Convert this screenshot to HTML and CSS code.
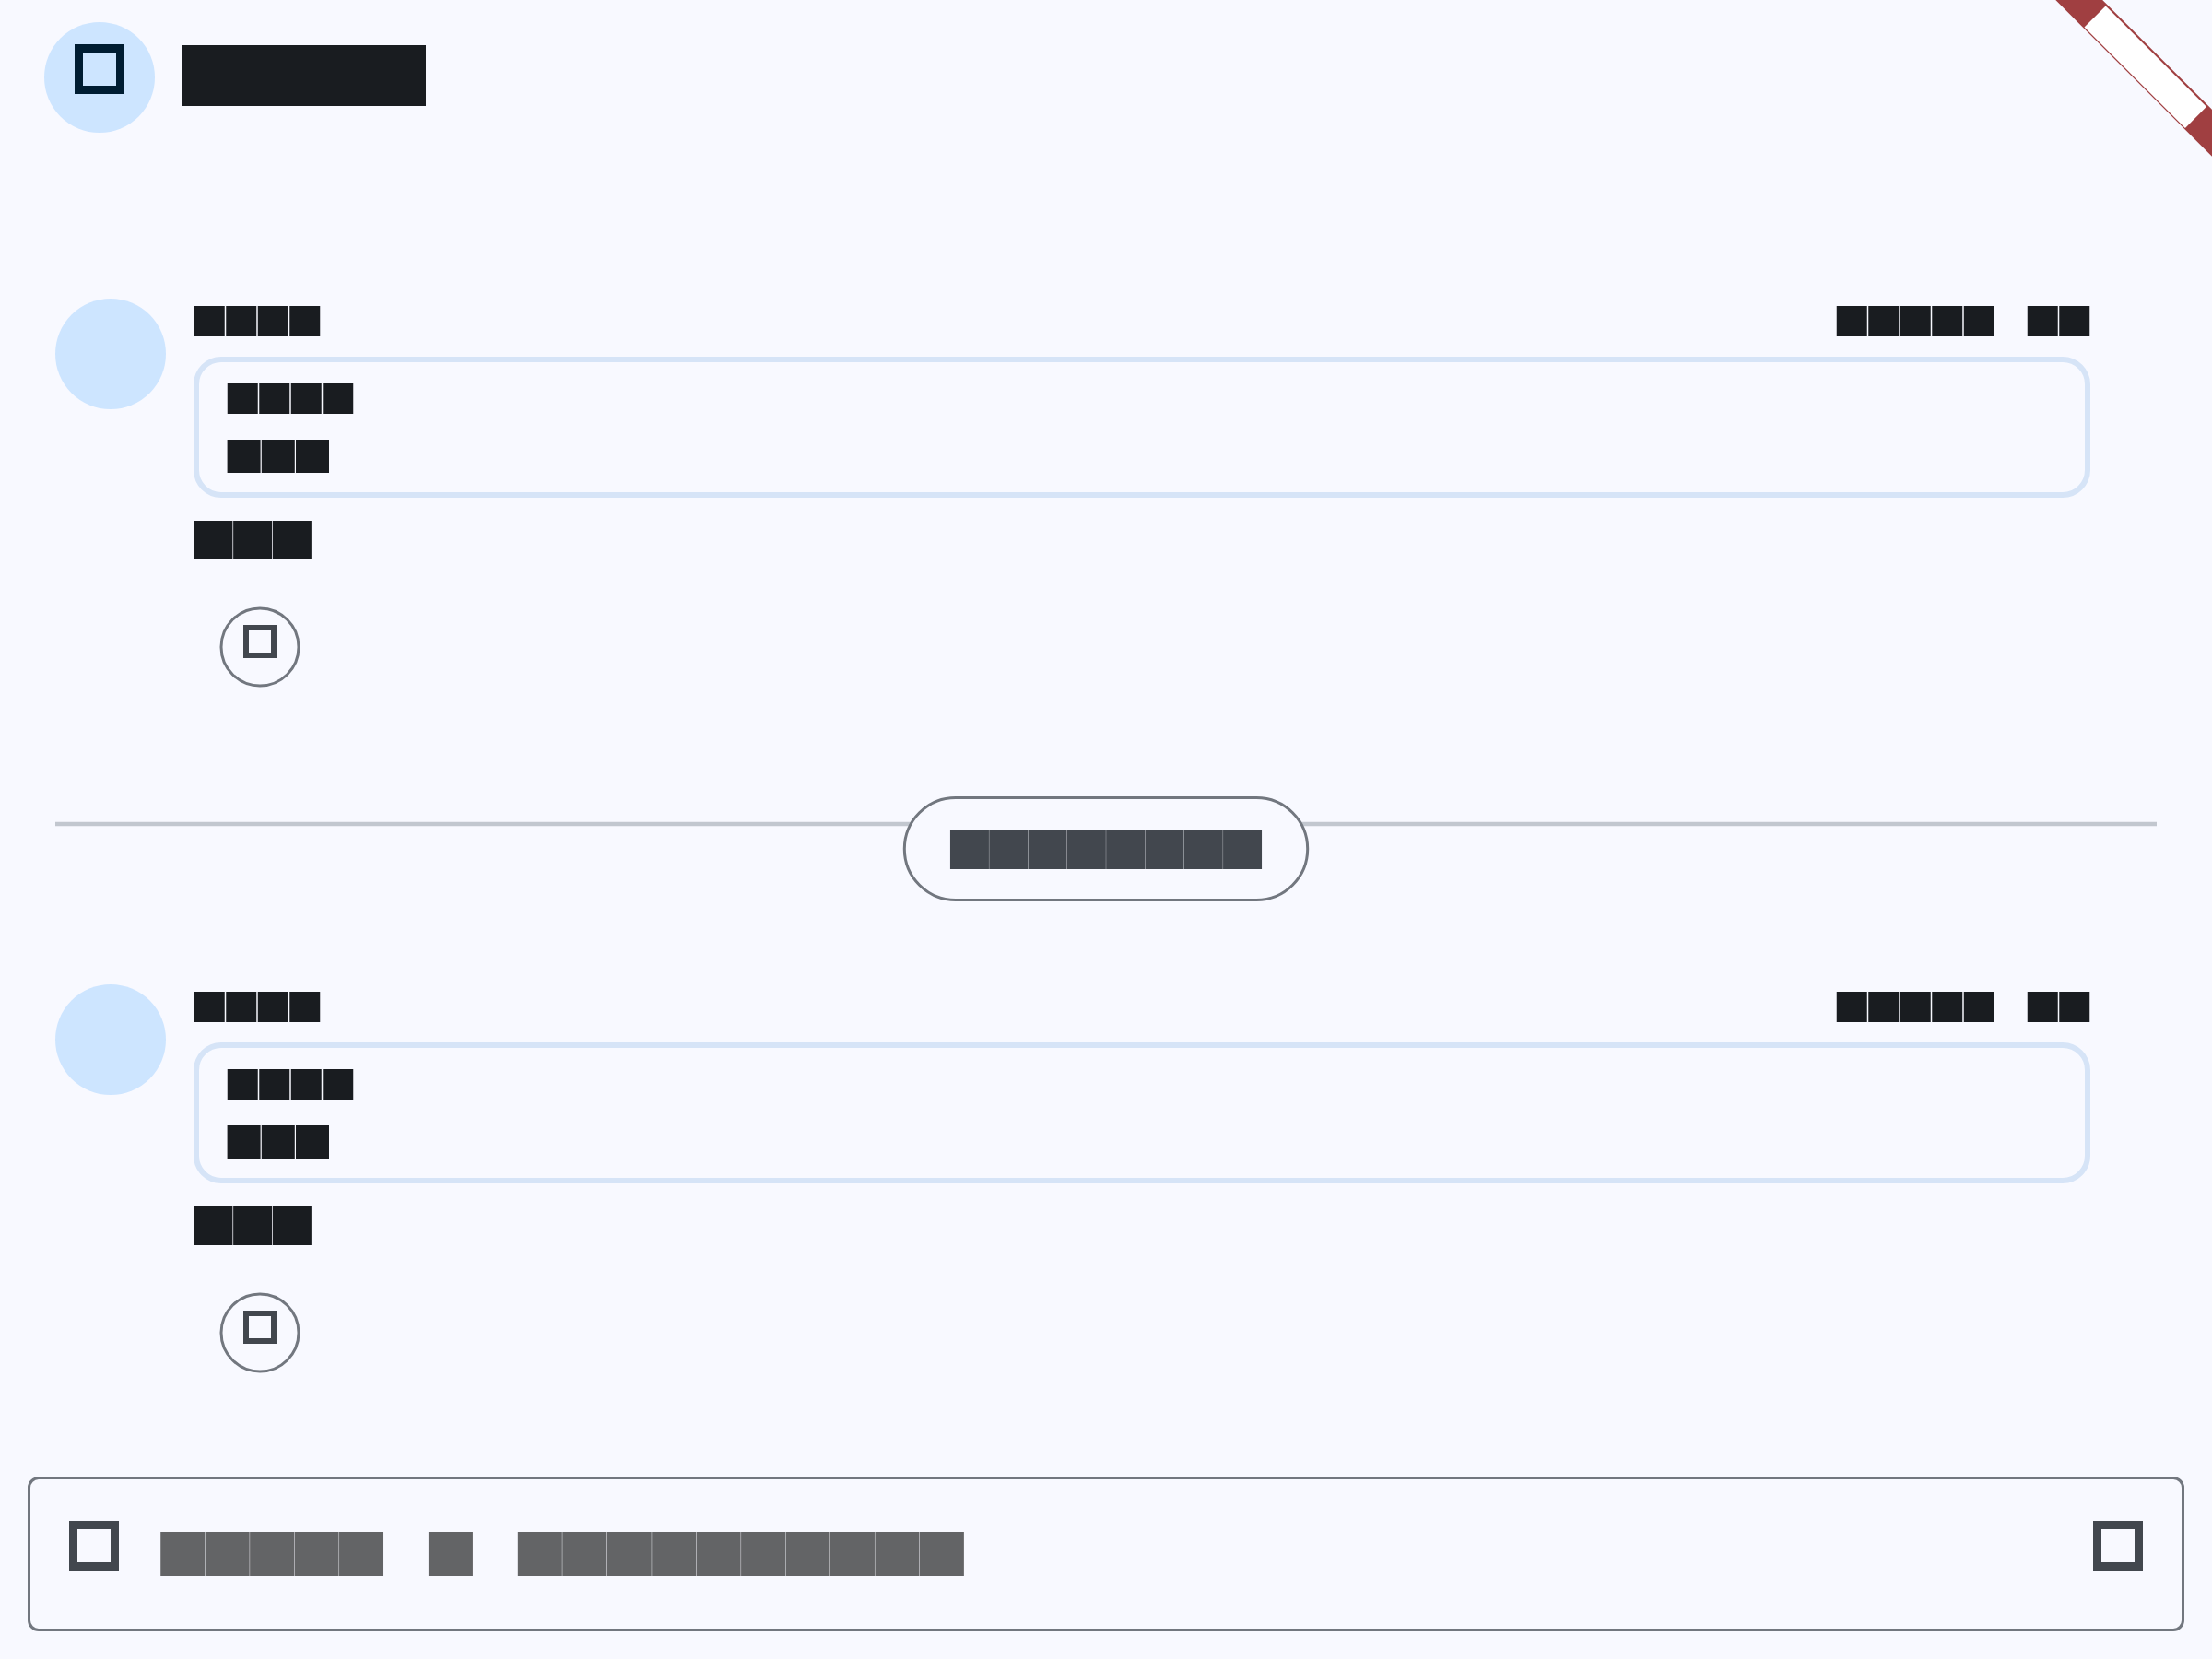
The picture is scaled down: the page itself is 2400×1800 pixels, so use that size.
FILE: index.html
```html
<!DOCTYPE html>
<html lang="en">
<head>
<meta charset="utf-8">
<title>Messages</title>
<link rel="stylesheet" href="styles.css">
</head>
<body>
<svg class="defs" aria-hidden="true">
  <defs>
    <g id="label-4"><rect x=".75" width="33" height="33"/><rect x="35.25" width="33" height="33"/><rect x="69.75" width="33" height="33"/><rect x="104.25" width="33" height="33"/></g>
    <g id="date"><use href="#label-4"/><rect x="138.75" width="33" height="33"/><rect x="207.75" width="33" height="33"/><rect x="242.25" width="33" height="33"/></g>
    <g id="small-3"><rect x=".6" width="36" height="36"/><rect x="37.8" width="36" height="36"/><rect x="75" width="36" height="36"/></g>
    <g id="body-3"><rect x=".375" width="42" height="42"/><rect x="43.125" width="42" height="42"/><rect x="85.875" width="42" height="42"/></g>
  </defs>
</svg>
<div class="screen">
  <header class="topbar">
    <div class="avatar avatar-icon"><span class="glyph glyph-primary"></span></div>
    <div class="title"></div>
  </header>

  <main class="thread">
    <article class="message">
      <div class="avatar"></div>
      <div class="content">
        <div class="meta">
          <svg width="138" height="33"><use href="#label-4"/></svg>
          <svg width="276" height="33"><use href="#date"/></svg>
        </div>
        <div class="quote">
          <svg width="138" height="33"><use href="#label-4"/></svg>
          <svg width="112" height="36"><use href="#small-3"/></svg>
        </div>
        <svg class="body" width="129" height="42"><use href="#body-3"/></svg>
        <div class="reaction">
          <svg class="ring" width="88" height="88"><circle cx="44" cy="44" r="42"/></svg>
          <span class="glyph glyph-small"></span>
        </div>
      </div>
    </article>

    <div class="divider">
      <svg class="rule" width="2280" height="6"><rect y=".75" width="2280" height="4.5"/></svg>
      <svg class="pill" width="442" height="114">
        <rect class="pill-shape" x="2.3" y="1.5" width="437.4" height="111" rx="55.5"/>
        <g class="pill-label">
          <rect x="51.95" y="37" width="42" height="42"/><rect x="94.25" y="37" width="42" height="42"/><rect x="136.55" y="37" width="42" height="42"/><rect x="178.85" y="37" width="42" height="42"/><rect x="221.15" y="37" width="42" height="42"/><rect x="263.45" y="37" width="42" height="42"/><rect x="305.75" y="37" width="42" height="42"/><rect x="348.05" y="37" width="42" height="42"/>
        </g>
      </svg>
    </div>

    <article class="message message-last">
      <div class="avatar"></div>
      <div class="content">
        <div class="meta">
          <svg width="138" height="33"><use href="#label-4"/></svg>
          <svg width="276" height="33"><use href="#date"/></svg>
        </div>
        <div class="quote">
          <svg width="138" height="33"><use href="#label-4"/></svg>
          <svg width="112" height="36"><use href="#small-3"/></svg>
        </div>
        <svg class="body" width="129" height="42"><use href="#body-3"/></svg>
        <div class="reaction">
          <svg class="ring" width="88" height="88"><circle cx="44" cy="44" r="42"/></svg>
          <span class="glyph glyph-small"></span>
        </div>
      </div>
    </article>
  </main>

  <footer class="composer">
    <span class="glyph"></span>
    <svg class="hint" width="873" height="48">
      <rect x=".225" width="48" height="48"/><rect x="48.675" width="48" height="48"/><rect x="97.125" width="48" height="48"/><rect x="145.575" width="48" height="48"/><rect x="194.025" width="48" height="48"/>
      <rect x="290.925" width="48" height="48"/>
      <rect x="387.825" width="48" height="48"/><rect x="436.275" width="48" height="48"/><rect x="484.725" width="48" height="48"/><rect x="533.175" width="48" height="48"/><rect x="581.625" width="48" height="48"/><rect x="630.075" width="48" height="48"/><rect x="678.525" width="48" height="48"/><rect x="726.975" width="48" height="48"/><rect x="775.425" width="48" height="48"/><rect x="823.875" width="48" height="48"/>
    </svg>
    <span class="glyph"></span>
  </footer>

  <svg class="ribbon" width="170" height="170">
    <polygon class="ribbon-band" points="0.3,0 51.2,0 170,118.8 170,169.7"/>
    <polygon class="ribbon-label" points="54.6,6.4 164,115.8 140.9,138.9 31.5,29.5"/>
  </svg>
</div>
</body>
</html>
```

FILE: styles.css
```css
* {
  box-sizing: border-box;
}

body {
  margin: 0;
  background: #f8f9ff;
  font-family: Roboto, sans-serif;
}

svg {
  display: block;
  flex: none;
}

.defs {
  position: absolute;
  width: 0;
  height: 0;
}

.screen {
  position: relative;
  display: flex;
  flex-direction: column;
  width: 2400px;
  height: 1800px;
  overflow: hidden;
  color: #191c20;
  fill: currentColor;
}

/* Top bar */
.topbar {
  display: flex;
  flex: none;
  align-items: flex-start;
  gap: 30px;
  height: 168px;
  padding: 24px 48px;
}

.avatar {
  flex: none;
  width: 120px;
  height: 120px;
  border-radius: 50%;
  background: #cde5ff;
}

.avatar-icon {
  display: flex;
  justify-content: center;
  padding-top: 24px;
}

.title {
  width: 264px;
  height: 66px;
  margin-top: 25px;
  background: #191c20;
}

.glyph {
  flex: none;
  width: 54px;
  height: 54px;
  border: 9px solid #42474e;
}

.glyph-primary {
  border-color: #001d32;
}

.glyph-small {
  width: 36px;
  height: 36px;
  border-width: 6px;
}

/* Messages */
.thread {
  flex: 1;
  padding: 156px 60px 0;
}

.message {
  display: flex;
  gap: 30px;
  height: 540px;
  padding-right: 72px;
}

.message-last {
  height: 450px;
}

.content {
  flex: 1;
  padding-top: 8px;
}

.meta {
  display: flex;
  justify-content: space-between;
}

.quote {
  display: flex;
  flex-direction: column;
  gap: 28px;
  height: 153px;
  margin-top: 22px;
  padding: 23px 30px;
  border: 6px solid #d6e4f7;
  border-radius: 30px;
}

.body {
  margin-top: 25px;
}

.reaction {
  display: grid;
  justify-items: center;
  width: 88px;
  height: 88px;
  margin: 51px 0 0 28px;
}

.reaction > * {
  grid-area: 1 / 1;
}

.reaction .glyph {
  margin-top: 20px;
}

.ring {
  fill: none;
  stroke: #72777f;
  stroke-width: 3;
}

/* Divider with centred pill */
.divider {
  display: grid;
  justify-items: center;
  height: 204px;
}

.divider > * {
  grid-area: 1 / 1;
}

.rule {
  margin-top: 27px;
  fill: #c2c7cf;
}

.pill-shape {
  fill: #f8f9ff;
  stroke: #72777f;
  stroke-width: 3;
}

.pill-label {
  fill: #42474e;
}

/* Composer */
.composer {
  display: flex;
  flex: none;
  align-items: flex-start;
  height: 168px;
  margin: 0 30px 30px;
  padding: 45px 42px;
  border: 3px solid #72777f;
  border-radius: 12px;
}

.composer .glyph:last-child {
  margin-left: auto;
}

.hint {
  margin: 12px 0 0 45px;
  fill: #636466;
}

/* Corner ribbon */
.ribbon {
  position: absolute;
  top: 0;
  right: 0;
}

.ribbon-band {
  fill: #a03f41;
}

.ribbon-label {
  fill: #ffffff;
}
```
